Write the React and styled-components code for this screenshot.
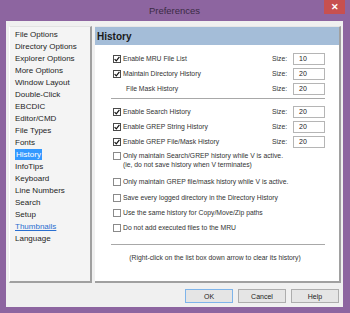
import React from 'react'
import styled, { createGlobalStyle } from 'styled-components'

const GlobalStyle = createGlobalStyle`
  html, body {
    margin: 0;
    padding: 0;
    background: #8d65a0;
  }
  body {
    font-family: "Liberation Sans", Arial, sans-serif;
    color: #1e1e1e;
  }
`

const Window = styled.div`
  width: 350px;
  height: 313px;
  background: #8d65a0;
  display: flex;
  flex-direction: column;
  box-sizing: border-box;
  padding: 0 7px 6px 6px;
`

const TitleBar = styled.div`
  height: 21px;
  position: relative;
  display: flex;
  align-items: center;
  justify-content: center;
  font-size: 9.5px;
  color: #3b2b45;
  padding-bottom: 1px;
  box-sizing: border-box;
`

const CloseButton = styled.div`
  position: absolute;
  top: 0;
  right: -2px;
  width: 21px;
  height: 14px;
  background: #c75050;
  color: #fff;
  font-size: 9px;
  font-weight: bold;
  display: flex;
  align-items: center;
  justify-content: center;
`

const Client = styled.div`
  flex: 1;
  background: #f0f0f0;
  display: flex;
  flex-direction: column;
  padding: 5px 2px 0 3px;
`

const Body = styled.div`
  display: flex;
  gap: 3px;
  height: 257px;
`

const PageList = styled.ul`
  list-style: none;
  margin: 0;
  width: 83px;
  box-sizing: border-box;
  padding: 2px 0 0 5px;
  background: #f4f4f4;
  border-top: 1px solid #e2e2e2;
  border-left: 1px solid #fff;
  border-right: 2px solid #a0a0a0;
  border-bottom: 2px solid #a0a0a0;
`

const PageItem = styled.li`
  height: 12px;
  line-height: 12px;
  font-size: 8px;
  color: ${p => (p.$link ? '#2a6fd0' : '#1e1e1e')};
  text-decoration: ${p => (p.$link ? 'underline' : 'none')};
`

const Selected = styled.span`
  background: #3399ff;
  color: #fff;
  padding: 1px 1px;
`

const Panel = styled.div`
  flex: 1;
  background: #fff;
  display: flex;
  flex-direction: column;
  border-top: 1px solid #e6e6e6;
  border-right: 2px solid #a0a0a0;
  border-bottom: 2px solid #a0a0a0;
`

const Header = styled.div`
  height: 18px;
  background: #a4bdd8;
  font-size: 10px;
  font-weight: bold;
  color: #1a1a1a;
  display: flex;
  align-items: center;
  padding-left: 2px;
`

const Content = styled.div`
  padding: 6px 14px 0 18px;
  font-size: 6.8px;
  color: #333;
  display: flex;
  flex-direction: column;
`

const Row = styled.div`
  display: flex;
  align-items: ${p => (p.$top ? 'flex-start' : 'center')};
  min-height: 15px;
  padding: ${p => (p.$top ? '2px 0 3px' : '0')};
  box-sizing: border-box;
  margin-top: ${p => p.$mt || 0}px;
`

const Label = styled.span`
  flex: 1;
  line-height: 9px;
  padding-left: ${p => (p.$indent ? '13px' : '2px')};
`

const Box = styled.span`
  width: 8px;
  height: 8px;
  box-sizing: border-box;
  border: 1px solid ${p => (p.$on ? '#4a4a4a' : '#8a8a8a')};
  background: #fff;
  flex: none;
  display: flex;
  align-items: center;
  justify-content: center;
  margin-top: ${p => (p.$top ? '1px' : '0')};
`

const SizeLabel = styled.span`
  width: 21px;
`

const SizeInput = styled.div`
  width: 32px;
  height: 12px;
  box-sizing: border-box;
  border: 1px solid #b5b5b5;
  background: #fff;
  font-size: 7px;
  line-height: 10px;
  padding-left: 5px;
  color: #222;
`

const Rule = styled.div`
  height: 1px;
  background: #a8a8a8;
  margin: ${p => p.$m};
  margin-left: -2px;
`

const Note = styled.div`
  text-align: center;
  line-height: 9px;
  padding-right: 8px;
`

const Footer = styled.div`
  flex: 1;
  display: flex;
  justify-content: flex-end;
  align-items: flex-start;
  gap: 5px;
  padding: 6px 2px 0 0;
`

const Button = styled.div`
  width: 48px;
  height: 14px;
  box-sizing: border-box;
  border: 1px solid ${p => (p.$default ? '#7eb4ea' : '#adadad')};
  background: #e5e5e5;
  font-size: 7px;
  color: #222;
  display: flex;
  align-items: center;
  justify-content: center;
`

const Check = ({ on, top }) => (
  <Box $on={on} $top={top}>
    {on && (
      <svg width="6" height="6" viewBox="0 0 6 6">
        <path d="M0.6 3.1 L2.3 4.8 L5.4 0.9" fill="none" stroke="#111" strokeWidth="1.2" />
      </svg>
    )}
  </Box>
)

const SizeRow = ({ label, value, on, box = true }) => (
  <Row>
    {box && <Check on={on} />}
    <Label $indent={!box}>{label}</Label>
    <SizeLabel>Size:</SizeLabel>
    <SizeInput>{value}</SizeInput>
  </Row>
)

const pages = [
  'File Options',
  'Directory Options',
  'Explorer Options',
  'More Options',
  'Window Layout',
  'Double-Click',
  'EBCDIC',
  'Editor/CMD',
  'File Types',
  'Fonts',
  'History',
  'InfoTips',
  'Keyboard',
  'Line Numbers',
  'Search',
  'Setup',
  'Thumbnails',
  'Language',
]

export default function App() {
  return (
    <Window>
      <GlobalStyle />
      <TitleBar>
        Preferences
        <CloseButton>✕</CloseButton>
      </TitleBar>
      <Client>
        <Body>
          <PageList>
            {pages.map(p => (
              <PageItem key={p} $link={p === 'Thumbnails'}>
                {p === 'History' ? <Selected>{p}</Selected> : p}
              </PageItem>
            ))}
          </PageList>
          <Panel>
            <Header>History</Header>
            <Content>
              <SizeRow on label="Enable MRU File List" value="10" />
              <SizeRow on label="Maintain Directory History" value="20" />
              <SizeRow box={false} label="File Mask History" value="20" />
              <Rule $m="2px 0 5px" />
              <SizeRow on label="Enable Search History" value="20" />
              <SizeRow on label="Enable GREP String History" value="20" />
              <SizeRow on label="Enable GREP File/Mask History" value="20" />
              <Row $top>
                <Check top />
                <Label>
                  Only maintain Search/GREP history while V is active.
                  <br />
                  (ie, do not save history when V terminates)
                </Label>
              </Row>
              <Row $mt={2}>
                <Check />
                <Label>Only maintain GREP file/mask history while V is active.</Label>
              </Row>
              <Row $mt={1}>
                <Check />
                <Label>Save every logged directory in the Directory History</Label>
              </Row>
              <Row>
                <Check />
                <Label>Use the same history for Copy/Move/Zip paths</Label>
              </Row>
              <Row>
                <Check />
                <Label>Do not add executed files to the MRU</Label>
              </Row>
              <Rule $m="9px 0 8px" />
              <Note>(Right-click on the list box down arrow to clear its history)</Note>
            </Content>
          </Panel>
        </Body>
        <Footer>
          <Button $default>OK</Button>
          <Button>Cancel</Button>
          <Button>Help</Button>
        </Footer>
      </Client>
    </Window>
  )
}
